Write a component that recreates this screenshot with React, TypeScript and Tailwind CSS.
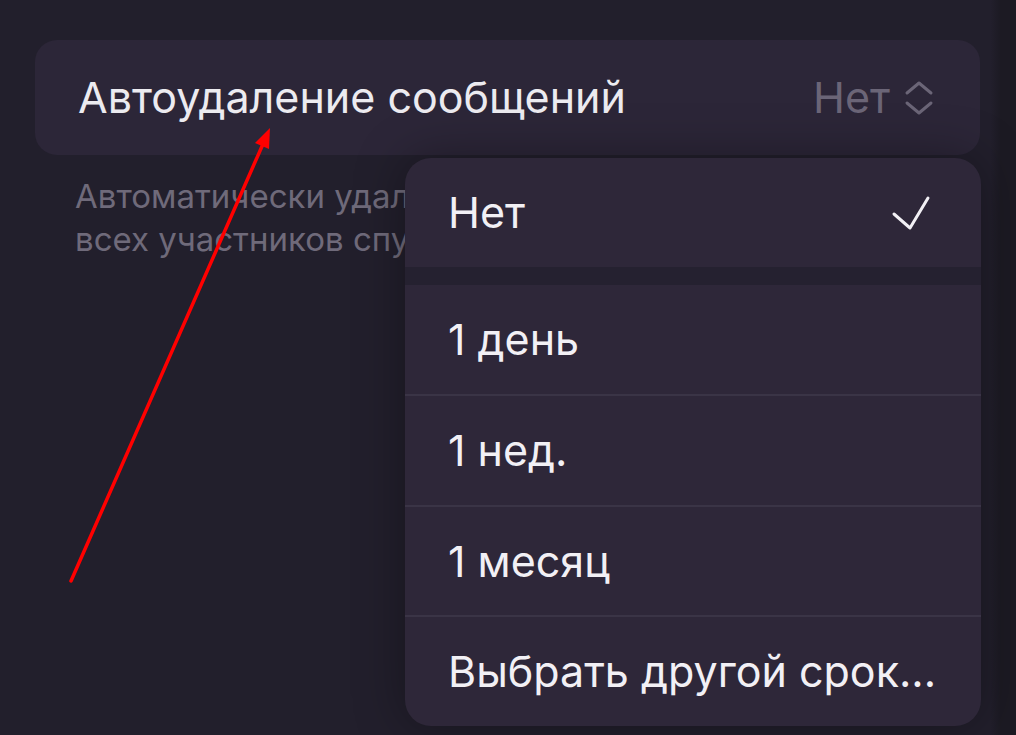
import React from 'react';

const options = ['1 день', '1 нед.', '1 месяц', 'Выбрать другой срок...'];

const UpDownIcon = () => (
  <svg width="30" height="36" viewBox="0 0 30 36" fill="none" className="ml-[14px]">
    <path d="M3 13 L15 3 L27 13" stroke="#6b6577" strokeWidth="3" strokeLinecap="round" strokeLinejoin="round" />
    <path d="M3 23 L15 33 L27 23" stroke="#6b6577" strokeWidth="3" strokeLinecap="round" strokeLinejoin="round" />
  </svg>
);

const Check = () => (
  <svg width="40" height="36" viewBox="0 0 40 36" fill="none">
    <path d="M3 19 L19 33 L37 3" stroke="#f2f0f5" strokeWidth="3" strokeLinecap="round" strokeLinejoin="round" />
  </svg>
);

export default function App() {
  return (
    <div
      className="relative w-[1016px] h-[735px] overflow-hidden bg-[linear-gradient(to_right,#221f2c_0%,#221f2c_97.5%,#1c1a23_98.5%)] pt-[40px] pl-[35px] pr-[36px]"
      style={{ fontFamily: 'Inter, "Noto Sans", sans-serif' }}
    >
      {/* settings row */}
      <div className="h-[115px] rounded-[22px] bg-[#2c2638] flex items-center justify-between pl-[43px] pr-[46px]">
        <span className="text-[43px] text-[#ecebf0]">Автоудаление сообщений</span>
        <div className="flex items-center">
          <span className="text-[43px] text-[#6b6577]">Нет</span>
          <UpDownIcon />
        </div>
      </div>

      {/* footnote, cut where the popup covers it */}
      <div className="mt-[20px] ml-[40px] w-[330px] overflow-hidden text-[33px] leading-[43px] text-[#6f6a7a] whitespace-nowrap">
        <div>Автоматически удалять сообщения в этом чате для</div>
        <div>всех участников спустя некоторое время.</div>
      </div>

      {/* popup menu */}
      <div className="absolute left-[405px] top-[158px] w-[576px] h-[568px] rounded-[26px] bg-[#2e2739] overflow-hidden shadow-[0_0_50px_rgba(0,0,0,0.35)] flex flex-col">
        <div className="h-[109px] flex items-center justify-between pl-[43px] pr-[50px]">
          <span className="text-[43px] text-[#f2f0f5]">Нет</span>
          <Check />
        </div>
        <div className="h-[18px] bg-[#252130]" />
        {options.map((o, i) => (
          <div
            key={o}
            className={`flex-1 flex items-center pl-[43px] ${i < options.length - 1 ? 'border-b-2 border-[#3a3446]' : ''}`}
          >
            <span className="text-[43px] text-[#f2f0f5]">{o}</span>
          </div>
        ))}
      </div>

      {/* red annotation arrow */}
      <svg className="absolute left-0 top-0 pointer-events-none" width="1016" height="735" viewBox="0 0 1016 735">
        <line x1="71" y1="581" x2="263" y2="144" stroke="#ff0000" strokeWidth="3.5" strokeLinecap="round" />
        <polygon points="270,128 255,143 269,149" fill="#ff0000" />
      </svg>
    </div>
  );
}
